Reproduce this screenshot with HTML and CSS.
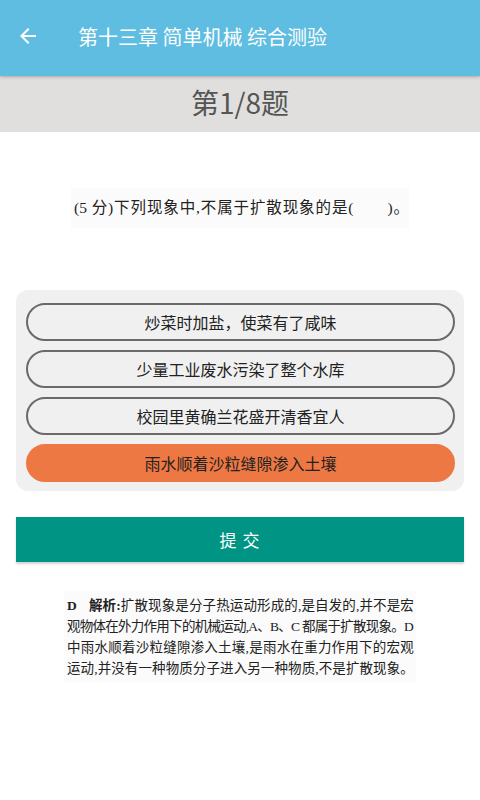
FILE: index.html
```html
<!DOCTYPE html>
<html lang="zh">
<head>
<meta charset="utf-8">
<title>第十三章 简单机械 综合测验</title>
<link rel="stylesheet" href="styles.css">
</head>
<body>
<header class="appbar">
  <svg class="back" width="24" height="24" viewBox="0 0 24 24"><path d="M20 11H7.83l5.59-5.59L12 4l-8 8 8 8 1.41-1.41L7.83 13H20v-2z" fill="#fff"/></svg>
  <h1 class="title">第十三章 简单机械 综合测验</h1>
</header>
<div class="band">第1/8题</div>
<section class="question">
  <p class="qtext">(5 分)下列现象中,不属于扩散现象的是(<span class="blank"></span>)。</p>
</section>
<section class="card">
  <div class="opt">炒菜时加盐，使菜有了咸味</div>
  <div class="opt">少量工业废水污染了整个水库</div>
  <div class="opt">校园里黄确兰花盛开清香宜人</div>
  <div class="opt selected">雨水顺着沙粒缝隙渗入土壤</div>
</section>
<button class="submit">提 交</button>
<section class="analysis">
  <div class="line"><b class="ans">D</b><b>解析:</b>扩散现象是分子热运动形成的,是自发的,并不是宏</div>
  <div class="line">观物体在外力作用下的机械运动,A、B、C 都属于扩散现象。D</div>
  <div class="line">中雨水顺着沙粒缝隙渗入土壤,是雨水在重力作用下的宏观</div>
  <div class="line">运动,并没有一种物质分子进入另一种物质,不是扩散现象。</div>
</section>
</body>
</html>
```
FILE: styles.css
```css
html, body {
  margin: 0;
  padding: 0;
  background: #fff;
  font-family: "Noto Sans CJK SC", "Noto Sans", sans-serif;
}
.appbar {
  height: 76px;
  background: #5ebde1;
  display: flex;
  align-items: center;
  padding-left: 16px;
  box-shadow: 0 1px 3px rgba(0,0,0,0.25);
  position: relative;
  z-index: 1;
}
.back {
  display: block;
  margin-top: -4px;
}
.title {
  margin: -3px 0 0 38px;
  font-size: 20px;
  font-weight: normal;
  color: #fff;
}
.band {
  height: 56px;
  background: #e0dfde;
  display: flex;
  align-items: center;
  justify-content: center;
  font-size: 28px;
  color: #555;
  padding-bottom: 4px;
  box-sizing: border-box;
}
.question {
  height: 158px;
  display: flex;
  justify-content: center;
  align-items: flex-start;
}
.qtext {
  margin: 56px 0 0 0;
  width: 338px;
  padding: 0 0 0 3px;
  height: 40px;
  line-height: 40px;
  background: #fbfbfb;
  font-family: "Liberation Serif", "Noto Sans CJK SC", serif;
  font-size: 15.5px;
  color: #222;
  text-align: justify;
  text-align-last: justify;
  box-sizing: border-box;
}
.blank {
  display: inline-block;
  width: 34px;
}
.card {
  margin: 0 16px;
  background: #f0f0f0;
  border-radius: 12px;
  padding: 13px 9px 9px 10px;
  display: flex;
  flex-direction: column;
  gap: 9px;
}
.opt {
  height: 38px;
  box-sizing: border-box;
  border: 2px solid #6a6a6a;
  border-radius: 19px;
  display: flex;
  align-items: center;
  justify-content: center;
  font-size: 16px;
  color: #222;
}
.opt.selected {
  background: #ee7843;
  border-color: #ee7843;
}
.submit {
  display: block;
  margin: 26px 16px 0;
  width: 448px;
  height: 45px;
  border: 0;
  border-radius: 0;
  background: #009485;
  color: #fff;
  font-family: inherit;
  font-size: 17px;
  box-shadow: 0 2px 2px rgba(0,0,0,0.18);
  letter-spacing: 1px;
}
.analysis {
  margin: 29px auto 0;
  width: 352px;
  padding: 4px 3px 4px 3px;
  background: #fbfbfb;
  box-sizing: border-box;
  font-family: "Liberation Serif", "Noto Sans CJK SC", serif;
  font-size: 13.5px;
  letter-spacing: -0.8px;
  color: #222;
}
.line {
  height: 21px;
  line-height: 21px;
  white-space: nowrap;
  text-align: justify;
  text-align-last: justify;
}
.ans {
  margin-right: 12px;
}
```
